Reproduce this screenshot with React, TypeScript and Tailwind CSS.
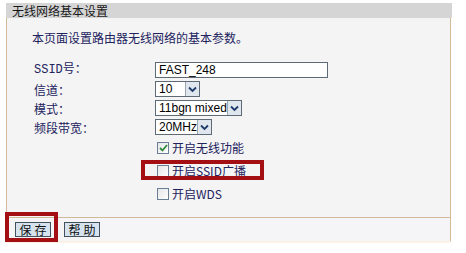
import React from "react";

const labelCls = "w-[121px] text-[12px] leading-[15px] text-[#22225e]";

const Chevron = () => (
  <svg width="9" height="7" viewBox="0 0 9 7">
    <path d="M1 1.5 L4.5 5 L8 1.5" fill="none" stroke="#1e3a6a" strokeWidth="1.8" />
  </svg>
);

const FakeSelect = ({ value, width }: { value: string; width: string }) => (
  <div className={`flex h-[16px] items-stretch border border-[#5e6b77] bg-white ${width}`}>
    <div className="flex-1 overflow-hidden whitespace-nowrap pl-[3px] text-[12px] leading-[14px] text-black font-['Liberation_Sans',sans-serif]">
      {value}
    </div>
    <div className="flex w-[14px] shrink-0 items-center justify-center border-l border-[#9aa7b3] bg-[#dfe6ee]">
      <Chevron />
    </div>
  </div>
);

const Checkbox = ({ checked }: { checked?: boolean }) => (
  <div className="flex h-[12px] w-[12px] items-center justify-center border border-[#6a7f96] bg-gradient-to-br from-[#e6e6e6] to-white">
    {checked && (
      <svg width="9" height="8" viewBox="0 0 9 8">
        <path d="M1 4 L3.5 6.5 L8 1" fill="none" stroke="#2f8a3a" strokeWidth="1.8" />
      </svg>
    )}
  </div>
);

const CheckRow = ({ label, checked }: { label: string; checked?: boolean }) => (
  <div className="flex items-center gap-[3px] pl-[2px]">
    <Checkbox checked={checked} />
    <span className="text-[12px] leading-[14px] text-[#22225e]">{label}</span>
  </div>
);

const Btn = ({ label }: { label: string }) => (
  <div className="flex h-[15px] w-[36px] items-center justify-center border border-[#44505c] bg-[#d6e3ef] pl-[3px] text-[12px] leading-[13px] tracking-[3px] text-[#111]">
    {label}
  </div>
);

export default function App() {
  return (
    <div className="h-[253px] w-[466px] bg-white pl-[6px] pt-[3px] font-['Noto_Sans_CJK_SC',sans-serif]">
      <div className="w-[446px]">
        <div className="h-[15px] bg-[#d5d5d5] pl-[6px] text-[12px] leading-[15px] text-[#1a1a1a]">
          无线网络基本设置
        </div>
        <div className="h-[200px] w-[445px] border-b border-l border-r border-[#d2b99a] bg-[#f4f4f4] pl-[25px] pt-[13px]">
          <div className="text-[12px] leading-[13px] text-[#22225e]">本页面设置路由器无线网络的基本参数。</div>

          <div className="mt-[18px] flex flex-col gap-[3px] pl-[2px]">
            <div className="flex items-center">
              <div className={labelCls + " font-['Liberation_Mono','Noto_Sans_CJK_SC',monospace]"}>SSID号：</div>
              <div className="h-[16px] w-[173px] border border-[#5e6b77] bg-white pl-[3px] text-[12px] leading-[14px] text-black font-['Liberation_Sans',sans-serif]">
                FAST_248
              </div>
            </div>
            <div className="flex items-center">
              <div className={labelCls}>信道：</div>
              <FakeSelect value="10" width="w-[45px]" />
            </div>
            <div className="flex items-center">
              <div className={labelCls}>模式：</div>
              <FakeSelect value="11bgn mixed" width="w-[87px]" />
            </div>
            <div className="flex items-center">
              <div className={labelCls}>频段带宽：</div>
              <FakeSelect value="20MHz" width="w-[57px]" />
            </div>
          </div>

          <div className="mt-[6px] flex flex-col gap-[9px] pl-[123px]">
            <CheckRow label="开启无线功能" checked />
            <div className="relative">
              <CheckRow label="开启SSID广播" />
              <div className="absolute left-[-14px] top-[-4px] h-[20px] w-[123px] border-4 border-[#a30f12]" />
            </div>
            <CheckRow label="开启WDS" />
          </div>
        </div>
        <div className="relative flex h-[23px] w-[445px] items-center gap-[13px] border-r border-[#d2b99a] bg-[#f5f5f7] pl-[9px]">
          <Btn label="保存" />
          <Btn label="帮助" />
          <div className="absolute left-[-1px] top-[-6px] h-[30px] w-[53px] border-4 border-[#a30f12]" />
        </div>
        <div className="h-[2px] w-[445px] bg-[#fbf1e4]" />
      </div>
    </div>
  );
}
